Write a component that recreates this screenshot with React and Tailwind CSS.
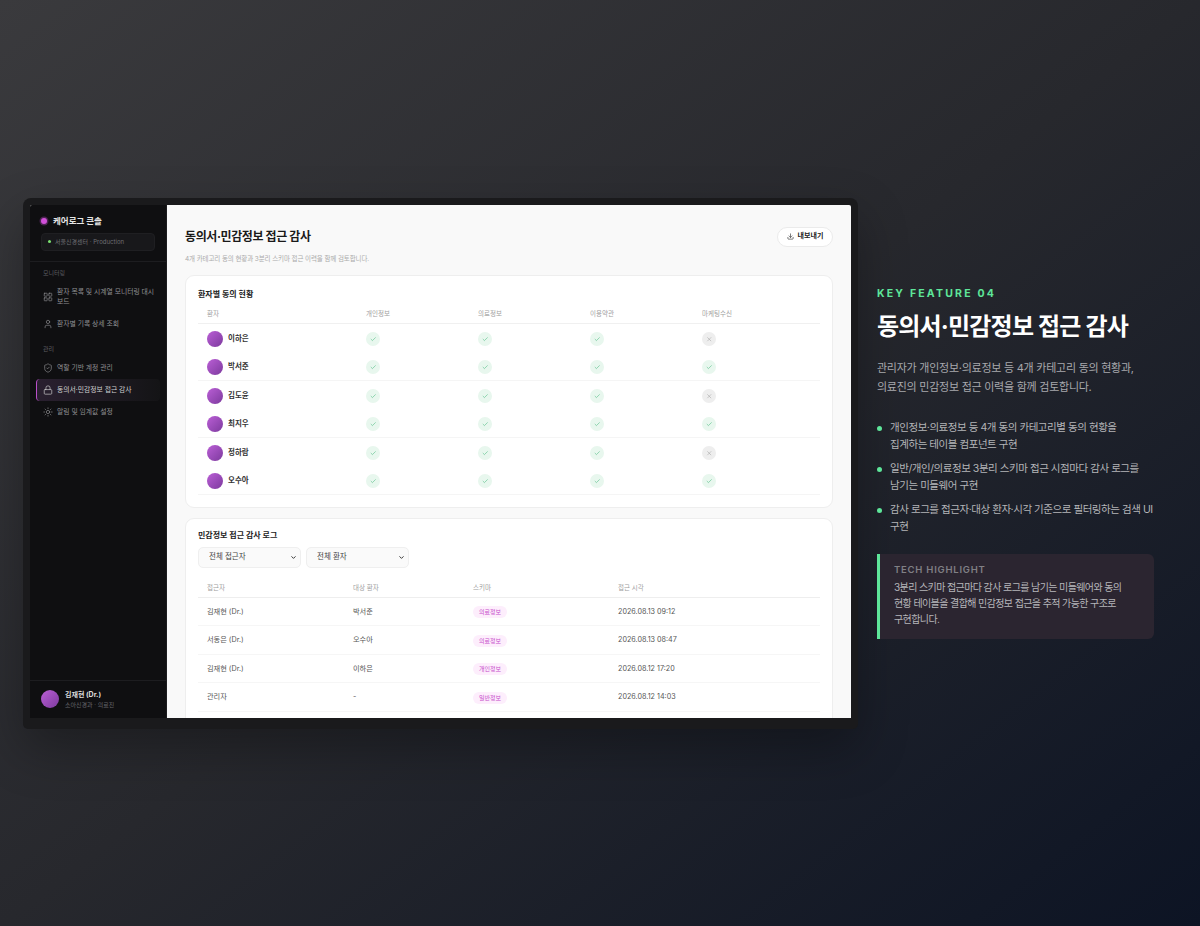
import React from 'react';
import { LayoutGrid, User, ShieldCheck, Lock, Sun, Check, X, Download, ChevronDown } from 'lucide-react';

const FONT = 'font-["Inter","Noto_Sans_CJK_KR",sans-serif]';

const CONSENTS = [
  { name: '이하은', marketing: false },
  { name: '박서준', marketing: true },
  { name: '김도윤', marketing: false },
  { name: '최지우', marketing: true },
  { name: '정하람', marketing: false },
  { name: '오수아', marketing: true },
];

const LOGS = [
  { who: '김재현 (Dr.)', target: '박서준', schema: '의료정보', at: '2026.08.13 09:12' },
  { who: '서동은 (Dr.)', target: '오수아', schema: '의료정보', at: '2026.08.13 08:47' },
  { who: '김재현 (Dr.)', target: '이하은', schema: '개인정보', at: '2026.08.12 17:20' },
  { who: '관리자', target: '-', schema: '일반정보', at: '2026.08.12 14:03' },
];

const BULLETS = [
  '개인정보·의료정보 등 4개 동의 카테고리별 동의 현황을 집계하는 테이블 컴포넌트 구현',
  '일반/개인/의료정보 3분리 스키마 접근 시점마다 감사 로그를 남기는 미들웨어 구현',
  '감사 로그를 접근자·대상 환자·시각 기준으로 필터링하는 검색 UI 구현',
];

const Avatar = ({ size = 'w-4 h-4' }) => (
  <div className={`${size} rounded-full shrink-0 bg-gradient-to-br from-[#bb5fd6] to-[#7d3a9e]`} />
);

const NavItem = ({ icon: Icon, children, active }) => (
  <div
    className={`flex items-center gap-[4px] pl-[6px] pr-[4px] rounded-[4px] border-l py-[6px] text-[6.8px] leading-[10px] ${
      active
        ? 'border-[#b94fc9] bg-gradient-to-r from-[#2a2030] to-[#141416] text-[#d0d0d0]'
        : 'border-transparent text-[#8f8f93]'
    }`}
  >
    <Icon className="w-[10px] h-[10px] shrink-0" strokeWidth={1.6} />
    <span>{children}</span>
  </div>
);

const Sidebar = () => (
  <aside className="w-[137px] shrink-0 bg-[#0f0f11] flex flex-col border-r border-[#1c1c1f]">
    <div className="px-[11px] pt-[10px] pb-[10px] border-b border-[#1d1d20]">
      <div className="flex items-center gap-[6px]">
        <div className="w-[6px] h-[6px] rounded-full bg-[#d04fd8] shadow-[0_0_0_1.5px_#4a2450]" />
        <span className="text-[8.5px] leading-[12px] font-bold text-[#e6e6e6]">케어로그 콘솔</span>
      </div>
      <div className="mt-[6px] h-[18px] rounded-[4px] bg-[#18181b] border border-[#1f1f22] flex items-center gap-[4px] px-[6px]">
        <div className="w-[3px] h-[3px] rounded-full bg-[#7ae070]" />
        <span className="text-[6px] text-[#6f6f74]">서울신경센터 · Production</span>
      </div>
    </div>
    <div className="px-[6px] pt-[7px] flex-1">
      <div className="px-[7px] text-[6px] leading-[8px] text-[#5d5d62] mb-[4px]">모니터링</div>
      <NavItem icon={LayoutGrid}>환자 목록 및 시계열 모니터링 대시보드</NavItem>
      <NavItem icon={User}>환자별 기록 상세 조회</NavItem>
      <div className="px-[7px] text-[6px] leading-[8px] text-[#5d5d62] mt-[10px] mb-[4px]">관리</div>
      <NavItem icon={ShieldCheck}>역할 기반 계정 관리</NavItem>
      <NavItem icon={Lock} active>동의서·민감정보 접근 감사</NavItem>
      <NavItem icon={Sun}>알림 및 임계값 설정</NavItem>
    </div>
    <div className="h-[38px] shrink-0 border-t border-[#1d1d20] flex items-center gap-[6px] px-[11px]">
      <Avatar size="w-[18px] h-[18px]" />
      <div>
        <div className="text-[7px] leading-[10px] font-bold text-[#dedede]">김재현 (Dr.)</div>
        <div className="text-[6px] leading-[9px] text-[#66666b]">소아신경과 · 의료진</div>
      </div>
    </div>
  </aside>
);

const ConsentMark = ({ on }) => (
  <div className={`w-[14px] h-[14px] rounded-full flex items-center justify-center ${on ? 'bg-[#e8f7ee]' : 'bg-[#eeeeee]'}`}>
    {on
      ? <Check className="w-[6.5px] h-[6.5px] text-[#45b87a]" strokeWidth={2} />
      : <X className="w-[6.5px] h-[6.5px] text-[#9a9a9a]" strokeWidth={1.8} />}
  </div>
);

const ConsentCard = () => (
  <section className="h-[233px] shrink-0 bg-white border border-[#eeeeee] rounded-[9px] px-[12px] pt-[12px]">
    <h3 className="text-[8px] leading-[12px] font-bold text-[#222]">환자별 동의 현황</h3>
    <div className="mt-[10px]">
      <div className="grid grid-cols-[159px_112px_112px_112px_1fr] h-[14px] border-b border-[#f0f0f0] text-[6.5px] text-[#a0a0a0] [&>div]:pl-[9px]">
        <div>환자</div>
        <div>개인정보</div>
        <div>의료정보</div>
        <div>이용약관</div>
        <div>마케팅수신</div>
      </div>
      {CONSENTS.map((p, i) => (
        <div
          key={p.name}
          className={`grid grid-cols-[159px_112px_112px_112px_1fr] h-[28.5px] pt-[2px] items-center [&>div]:ml-[9px] ${i % 2 === 1 || i === 5 ? 'border-b border-[#f5f5f5]' : ''}`}
        >
          <div className="flex items-center gap-[5px]">
            <Avatar />
            <span className="text-[7.5px] font-semibold text-[#333]">{p.name}</span>
          </div>
          <div><ConsentMark on /></div>
          <div><ConsentMark on /></div>
          <div><ConsentMark on /></div>
          <div><ConsentMark on={p.marketing} /></div>
        </div>
      ))}
    </div>
  </section>
);

const FilterSelect = ({ label }) => (
  <div className="relative w-[103px]">
    <select className="block w-full h-[21px] appearance-none rounded-[5px] bg-[#fafafa] border border-[#efefef] pl-[10px] text-[7.5px] text-[#444]">
      <option>{label}</option>
    </select>
    <ChevronDown className="absolute right-[4px] top-[7px] w-[7px] h-[7px] text-[#222] pointer-events-none" strokeWidth={3} />
  </div>
);

const LogCard = () => (
  <section className="h-[240px] shrink-0 bg-white border border-[#eeeeee] rounded-[9px] px-[12px] pt-[10px]">
    <h3 className="text-[8px] leading-[12px] font-bold text-[#222]">민감정보 접근 감사 로그</h3>
    <div className="flex gap-[5px] mt-[6px]">
      <FilterSelect label="전체 접근자" />
      <FilterSelect label="전체 환자" />
    </div>
    <div className="mt-[16px]">
      <div className="grid grid-cols-[146px_120px_145px_1fr] h-[14px] border-b border-[#eeeeee] text-[6.5px] text-[#a0a0a0] [&>div]:pl-[9px]">
        <div>접근자</div>
        <div>대상 환자</div>
        <div>스키마</div>
        <div>접근 시각</div>
      </div>
      {LOGS.map((l) => (
        <div
          key={l.at}
          className="grid grid-cols-[146px_120px_145px_1fr] h-[28.5px] pt-[2px] items-center border-b border-[#f6f6f6] text-[7.2px] text-[#555] [&>div]:pl-[9px]"
        >
          <div>{l.who}</div>
          <div>{l.target}</div>
          <div>
            <span className="inline-block rounded-full bg-[#fdeefc] text-[#c64ccb] text-[6px] leading-[12px] px-[6px]">{l.schema}</span>
          </div>
          <div>{l.at}</div>
        </div>
      ))}
    </div>
  </section>
);

const Laptop = () => (
  <div className="w-[835px] h-[531px] shrink-0 rounded-t-[8px] rounded-b-[5px] bg-[#1a1a1c] pt-[7px] px-[7px] pb-[11px] shadow-[0_20px_50px_rgba(0,0,0,0.3)]">
    <div className="h-full flex overflow-hidden rounded-t-[2px] bg-[#f9f9f9]">
      <Sidebar />
      <main className="flex-1 min-w-0 flex flex-col gap-[10px] px-[18px] overflow-hidden">
        <div>
          <div className="flex items-center justify-between pt-[22px]">
            <h1 className="text-[12px] leading-[20px] font-bold tracking-[-0.4px] text-[#1a1a1a]">동의서·민감정보 접근 감사</h1>
            <button className="h-[20px] w-[56px] flex items-center justify-center gap-[4px] rounded-full bg-white border border-[#ebebeb] text-[7px] font-semibold text-[#222]">
              <Download className="w-[7px] h-[7px]" strokeWidth={2} />
              내보내기
            </button>
          </div>
          <p className="mt-[7px] mb-[1px] text-[6.5px] leading-[10px] tracking-[-0.1px] text-[#ababab]">4개 카테고리 동의 현황과 3분리 스키마 접근 이력을 함께 검토합니다.</p>
        </div>
        <ConsentCard />
        <LogCard />
      </main>
    </div>
  </div>
);

const FeatureCopy = () => (
  <div className="w-[277px] shrink-0">
    <div className="text-[10.5px] leading-[14px] font-bold tracking-[0.21em] text-[#5ee69a]">KEY FEATURE 04</div>
    <h2 className="mt-[8px] text-[24px] leading-[36px] font-bold tracking-[-0.8px] text-white">동의서·민감정보 접근 감사</h2>
    <p className="mt-[14px] text-[11px] leading-[19px] tracking-[-0.25px] text-[#a8a9ad]">
      관리자가 개인정보·의료정보 등 4개 카테고리 동의 현황과,<br />
      의료진의 민감정보 접근 이력을 함께 검토합니다.
    </p>
    <ul className="mt-[23px] flex flex-col gap-[8px]">
      {BULLETS.map((b) => (
        <li key={b} className="flex gap-[8px] text-[10.5px] leading-[16.5px] tracking-[-0.45px] text-[#b4b5b8] break-keep">
          <span className="mt-[6px] w-[5px] h-[5px] rounded-full bg-[#5ee69a] shrink-0" />
          <span>{b}</span>
        </li>
      ))}
    </ul>
    <div className="mt-[19px] h-[85px] border-l-[3px] border-[#5ee69a] rounded-r-[6px] bg-[#2b2530] pl-[14px] pr-[24px] pt-[9px]">
      <div className="text-[9.5px] leading-[14px] font-semibold tracking-[0.08em] text-[#808085]">TECH HIGHLIGHT</div>
      <p className="mt-[2px] text-[10px] leading-[16px] tracking-[-0.6px] text-[#b6b6ba] break-keep">
        3분리 스키마 접근마다 감사 로그를 남기는 미들웨어와 동의 현황 테이블을 결합해 민감정보 접근을 추적 가능한 구조로 구현합니다.
      </p>
    </div>
  </div>
);

export default function App() {
  return (
    <div className={`${FONT} w-full h-[926px] overflow-hidden flex items-center gap-[19px] pl-[23px] bg-gradient-to-br from-[#3a3a3d] via-[#27282d] to-[#0d1424]`}>
      <Laptop />
      <FeatureCopy />
    </div>
  );
}
